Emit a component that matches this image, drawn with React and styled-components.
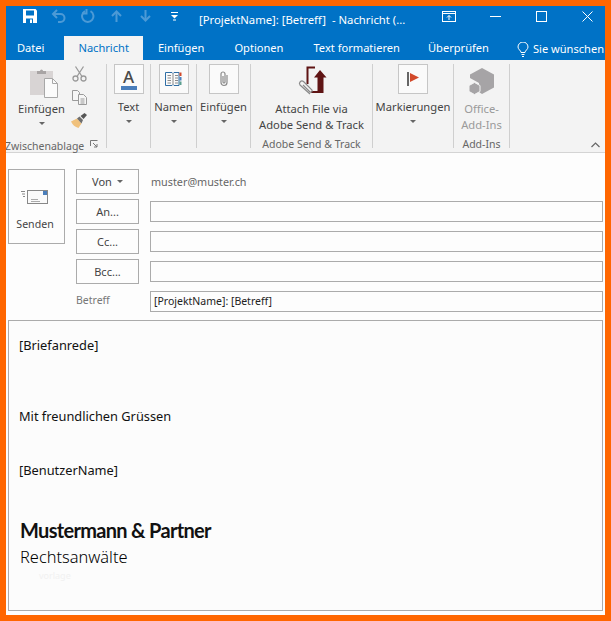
import React from "react"
import styled, { createGlobalStyle } from "styled-components"

const GlobalStyle = createGlobalStyle`
  html, body { margin: 0; padding: 0; background: #ff6600; }
  body { font-family: "Noto Sans", "Open Sans", sans-serif; }
`

const Frame = styled.div`
  box-sizing: border-box;
  width: 611px;
  height: 621px;
  border: 6px solid #ff6600;
  background: #fdfdfd;
  display: flex;
  flex-direction: column;
  overflow: hidden;
`

const TitleBar = styled.div`
  height: 30px;
  flex: none;
  background: #0072c6;
  display: flex;
  align-items: flex-start;
  padding-left: 9px;
  color: #fff;
`

const QatSlot = styled.div`
  width: 29px;
  height: 20px;
  flex: none;
  display: flex;
  align-items: center;
  justify-content: center;
`

const Title = styled.div`
  margin-left: 10px;
  font-size: 11.3px;
  line-height: 27px;
  white-space: pre;
  flex: 1;
`

const WindowControls = styled.div`
  display: flex;
  margin-right: -5px;
`

const WindowButton = styled.div`
  width: 46px;
  height: 20px;
  display: flex;
  align-items: center;
  justify-content: center;
`

const TabRow = styled.div`
  height: 24px;
  flex: none;
  background: #0072c6;
  display: flex;
`

const Tab = styled.div`
  padding: 2px ${(p) => (p.$active ? 14 : 15)}px 0;
  font-size: 11.1px;
  color: ${(p) => (p.$active ? "#0072c6" : "#fff")};
  background: ${(p) => (p.$active ? "#f3f3f3" : "transparent")};
  white-space: nowrap;
  line-height: 20px;
`

const FileTab = styled(Tab)`
  padding: 2px 20px 0 11px;
`

const CheckTab = styled(Tab)`
  padding-left: 13px;
  padding-right: 14px;
`

const TellMe = styled(Tab)`
  display: flex;
  align-items: center;
  gap: 4px;
  padding-left: 14px;
  padding-right: 0;
`

const Ribbon = styled.div`
  height: 84px;
  flex: none;
  background: #f3f3f3;
  border-bottom: 1px solid #d4d4d4;
  padding: 4px 0;
  display: flex;
  position: relative;
`

const Group = styled.div`
  box-sizing: border-box;
  width: ${(p) => p.$width}px;
  height: 84px;
  flex: none;
  border-right: 1px solid #cfcfcf;
  display: flex;
  flex-direction: column;
  align-items: center;
`

const GroupBody = styled.div`
  flex: 1;
  width: 100%;
  display: flex;
  flex-direction: column;
  align-items: center;
`

const GroupLabel = styled.div`
  height: 14px;
  line-height: 14px;
  margin-bottom: -3px;
  font-size: 10.5px;
  color: #666;
  white-space: nowrap;
  text-align: center;
`

const ClipboardBody = styled.div`
  flex: 1;
  display: flex;
  width: 100%;
  padding-left: 12px;
  box-sizing: border-box;
  gap: 6px;
`

const PasteColumn = styled.div`
  width: 47px;
  display: flex;
  flex-direction: column;
  align-items: center;
  padding-top: 4px;
`

const PasteIconWrap = styled.div`
  height: 30px;
  margin-left: 5px;
`

const SmallColumn = styled.div`
  width: 16px;
  display: flex;
  flex-direction: column;
  align-items: center;
  gap: 8px;
  padding-top: 2px;
`

const ClipboardFooter = styled.div`
  width: 100%;
  display: flex;
  align-items: center;
  height: 14px;
  margin-bottom: -3px;
  margin-left: -2px;
  gap: 6px;
`

const IconBox = styled.div`
  box-sizing: border-box;
  width: 30px;
  height: 30px;
  flex: none;
  border: 1px solid #c6c6c6;
  background: #fafafa;
  display: flex;
  flex-direction: column;
  align-items: center;
  justify-content: center;
`

const HexWrap = styled.div`
  height: 27px;
  margin-top: 4px;
`

const LetterA = styled.span`
  font-size: 17px;
  line-height: 16px;
  font-weight: 500;
  color: #4a4a4a;
`

const ColorBar = styled.span`
  width: 16px;
  height: 4px;
  background: #4a7ebb;
  margin-top: 1px;
`

const BtnLabel = styled.div`
  margin-top: ${(p) => p.$top ?? 5}px;
  font-size: 11.2px;
  line-height: 16px;
  color: ${(p) => (p.$disabled ? "#9a9a9a" : "#444")};
  white-space: nowrap;
  text-align: center;
`

const Caret = styled.span`
  display: block;
  width: 0;
  height: 0;
  margin-top: ${(p) => p.$top ?? 5}px;
  border-left: 3px solid transparent;
  border-right: 3px solid transparent;
  border-top: 3px solid #666;
`

const Collapse = styled.svg`
  position: absolute;
  right: 5px;
  bottom: 4px;
`

const Compose = styled.div`
  flex: 1;
  min-height: 0;
  display: flex;
  flex-direction: column;
  padding: 16px 2px 4px;
  gap: 6px;
`

const Header = styled.div`
  display: flex;
  gap: 11px;
  align-items: flex-start;
`

const SendButton = styled.div`
  box-sizing: border-box;
  width: 57px;
  height: 75px;
  flex: none;
  border: 1px solid #ababab;
  display: flex;
  flex-direction: column;
  align-items: center;
  padding: 20px 3px 0 0;
`

const SendLabel = styled.div`
  margin-top: 12px;
  font-size: 10.6px;
  line-height: 16px;
  color: #444;
`

const Fields = styled.div`
  flex: 1;
  display: flex;
  flex-direction: column;
  gap: 5px;
`

const FieldRow = styled.div`
  display: flex;
  align-items: center;
  gap: 11px;
  height: 25px;
`

const FieldButton = styled.div`
  box-sizing: border-box;
  width: 63px;
  height: 25px;
  flex: none;
  border: 1px solid #ababab;
  display: flex;
  align-items: center;
  justify-content: center;
  gap: 5px;
  font-size: 11px;
  color: #444;
`

const FromAddress = styled.div`
  font-size: 10.8px;
  color: #666;
  padding-left: 1px;
`

const Input = styled.div`
  box-sizing: border-box;
  flex: 1;
  height: 21px;
  border: 1px solid #ababab;
  padding-left: 3px;
  font-size: 10.5px;
  line-height: 19px;
  color: #222;
`

const SubjectLabel = styled.div`
  width: 63px;
  flex: none;
  font-size: 10.5px;
  line-height: 14px;
  color: #777;
  margin-top: -4px;
`

const Body = styled.div`
  box-sizing: border-box;
  flex: 1;
  border: 1px solid #ababab;
  background: #fcfcfc;
  padding: 0 10px;
  color: #111;
`

const Line = styled.div`
  margin-top: ${(p) => p.$top}px;
  font-size: 12.8px;
  line-height: 18px;
`

const FirmName = styled.div`
  margin-top: 39px;
  margin-left: 1px;
  font-family: "Lato", "Noto Sans", sans-serif;
  font-size: 20px;
  line-height: 24px;
  font-weight: 700;
  letter-spacing: -0.68px;
`

const FirmKind = styled.div`
  margin-top: 5px;
  margin-left: 1px;
  font-size: 16.4px;
  line-height: 20px;
  font-weight: 300;
  color: #000;
`

const Watermark = styled.div`
  margin-top: 3px;
  margin-left: 20px;
  font-size: 9px;
  line-height: 12px;
  color: #f1f1f1;
`

const SaveIcon = () => (
  <svg width="14" height="14" viewBox="0 0 14 14">
    <path d="M0 0h12.500L14 1.500V14H0z" fill="#fff" />
    <rect x="3" y="1.500" width="8" height="5" fill="#0072c6" />
    <rect x="3" y="9.500" width="7" height="4.500" fill="#0072c6" />
    <rect x="7" y="10.500" width="2" height="3.500" fill="#fff" />
  </svg>
)

const UndoIcon = () => (
  <svg width="15" height="14" viewBox="0 0 15 14" fill="none" stroke="#4c9ad6" strokeWidth="2">
    <path d="M2 5h7.500a4 4 0 0 1 0 8H7" />
    <path d="M6 1L2 5l4 4" />
  </svg>
)

const RedoIcon = () => (
  <svg width="14" height="14" viewBox="0 0 14 14" fill="none" stroke="#4c9ad6" strokeWidth="2">
    <path d="M9.500 2.200a5.700 5.700 0 1 1-5.500 0" />
    <path d="M4.500 0.500v4.500h-4" transform="translate(1 -0.500)" />
  </svg>
)

const ArrowIcon = ({ down }) => (
  <svg width="11" height="12" viewBox="0 0 11 12" fill="none" stroke="#4c9ad6" strokeWidth="2">
    <g transform={down ? "rotate(180 5.500 6)" : undefined}>
      <path d="M5.500 12V2" />
      <path d="M1 6l4.500-4.500L10 6" />
    </g>
  </svg>
)

const QatMenuIcon = () => (
  <svg width="9" height="9" viewBox="0 0 9 9" fill="#fff">
    <rect x="1" y="0" width="7" height="1" />
    <path d="M1 3h7L4.500 6.500z" />
    <rect x="3" y="7.500" width="3" height="1" />
  </svg>
)

const RibbonDisplayIcon = () => (
  <svg width="14" height="11" viewBox="0 0 14 11" fill="none" stroke="#fff">
    <rect x="0.500" y="0.500" width="13" height="10" />
    <path d="M0.500 2.500h13M7 9V4.500M5 6.500l2-2 2 2" />
  </svg>
)

const MinimizeIcon = () => (
  <svg width="11" height="11" viewBox="0 0 11 11" stroke="#fff">
    <path d="M0 5.500h11" />
  </svg>
)

const MaximizeIcon = () => (
  <svg width="11" height="11" viewBox="0 0 11 11" fill="none" stroke="#fff">
    <rect x="0.500" y="0.500" width="10" height="10" />
  </svg>
)

const CloseIcon = () => (
  <svg width="11" height="11" viewBox="0 0 11 11" stroke="#fff">
    <path d="M0.500 0.500l10 10M10.500 0.500l-10 10" />
  </svg>
)

const BulbIcon = () => (
  <svg width="12" height="15" viewBox="0 0 12 15" fill="none" stroke="#fff">
    <path d="M4 10.500C4 8.500 1 7.500 1 5a5 5 0 0 1 10 0c0 2.500-3 3.500-3 5.500z" />
    <path d="M4.500 12.500h3M5 14.500h2" />
  </svg>
)

const PasteIcon = () => (
  <svg width="28" height="30" viewBox="0 0 28 30">
    <rect x="0" y="3" width="23" height="24" fill="#d8d4d4" />
    <path d="M7 3h3a1.500 1.500 0 0 1 3 0H16v3H7z" fill="#a8a4a4" />
    <path d="M14.500 10.500h8l5 5v14h-13z" fill="#fbfbfb" stroke="#a8a8a8" />
    <path d="M22.500 10.500v5h5" fill="none" stroke="#a8a8a8" />
  </svg>
)

const ScissorsIcon = () => (
  <svg width="15" height="16" viewBox="0 0 15 16" fill="none" stroke="#9a9a9a" strokeWidth="1.300">
    <circle cx="3.500" cy="12.500" r="2.500" />
    <circle cx="11.500" cy="12.500" r="2.500" />
    <path d="M5 10.500L11.500 0.500M10 10.500L3.500 0.500" />
  </svg>
)

const CopyIcon = () => (
  <svg width="15" height="15" viewBox="0 0 15 15" fill="#f6f6f6" stroke="#9a9a9a">
    <path d="M0.500 0.500h5l2 2v8h-7z" />
    <path d="M6.500 4.500h5l3 3v7h-8z" />
    <path d="M8.500 9h4M8.500 11h4M8.500 13h4" />
  </svg>
)

const BrushIcon = () => (
  <svg width="16" height="15" viewBox="0 0 16 15">
    <path d="M0 8.500L6 5.500L10.500 10.500L7.500 15C4 14 1.500 12 0 8.500z" fill="#f0c17c" />
    <path d="M6 5.500L8.500 3.500L12 7L10.500 10.500z" fill="#6e6e6e" />
    <path d="M9.500 3L13.500 0L16 2L12.500 6z" fill="#555" />
  </svg>
)

const LauncherIcon = () => (
  <svg width="8" height="8" viewBox="0 0 8 8" fill="none" stroke="#777">
    <path d="M0.500 6V0.500H7.500" />
    <path d="M3 3l4 4M7 4v3H4" />
  </svg>
)

const BookIcon = () => (
  <svg width="17" height="14" viewBox="0 0 17 14" fill="none" stroke="#2f6ea5">
    <path d="M0.500 0.500h6.500l1 1 1-1h5v13h-5l-1-1-1 1H0.500z" />
    <path d="M8 1.500v11M2.500 3.500h3.500M2.500 6h3.500M2.500 8.500h3.500M2.500 11h3.500M10 3.500h3M10 6h3M10 8.500h3M10 11h3" stroke="#8a8a8a" />
    <rect x="14.500" y="0.500" width="2" height="3.500" fill="#d2492a" stroke="none" />
    <rect x="14.500" y="5" width="2" height="3.500" fill="#4a7ebb" stroke="none" />
    <rect x="14.500" y="9.500" width="2" height="3.500" fill="#5b9e8f" stroke="none" />
  </svg>
)

const ClipIcon = () => (
  <svg width="10" height="16" viewBox="0 0 10 16" fill="none" stroke="#8a8a8a" strokeWidth="1.200">
    <path d="M8 4v7.500a3 3 0 0 1-6 0V3a2 2 0 0 1 4 0v8a1 1 0 0 1-2 0V5" />
  </svg>
)

const FlagIcon = () => (
  <svg width="12" height="14" viewBox="0 0 12 14">
    <rect x="0" y="0" width="2" height="14" fill="#666" />
    <path d="M3 1L12 5.500L3 10z" fill="#d2492a" />
  </svg>
)

const HexIcon = () => (
  <svg width="27" height="27" viewBox="0 0 27 27">
    <path d="M14 0L26 6.500V19.500L14 26L11 24V15L2 10V6.500z" fill="#a6a4a6" />
    <path d="M6.500 14.500L12 17.500V23.500L6.500 26.500L1 23.500V17.500z" fill="#a6a4a6" stroke="#f3f3f3" />
  </svg>
)

const AttachIcon = () => (
  <svg width="40" height="32" viewBox="0 0 40 32">
    <path d="M23 3.500H15.500V20" fill="none" stroke="#5f1414" strokeWidth="2" />
    <path d="M28 6L34.500 13.500H31.500V29H19V27H25.500V13.500H22z" fill="#5f1414" />
    <path d="M18 30L8 21a2.500 2.500 0 0 1 3.500-3.500L20 26a1.500 1.500 0 0 1-2 2L11 21" fill="none" stroke="#8a8a8a" strokeWidth="1.200" />
  </svg>
)

const MailIcon = () => (
  <svg width="28" height="14" viewBox="0 0 28 14" fill="none">
    <rect x="6.500" y="0.500" width="20" height="13" fill="#fafafa" stroke="#888" />
    <rect x="22" y="1" width="4" height="4" fill="#4a7ebb" />
    <path d="M10 9.500h7M10 11.500h9" stroke="#aaa" />
    <path d="M0 1.500h4M1 4h3M2 6.500h2" stroke="#888" />
  </svg>
)

const ribbonButtons = [
  { width: 44, label: "Text", icon: <><LetterA>A</LetterA><ColorBar /></> },
  { width: 46, label: "Namen", icon: <BookIcon /> },
  { width: 54, label: "Einfügen", icon: <ClipIcon /> },
]

const App = () => (
  <Frame>
    <GlobalStyle />
    <TitleBar>
      <QatSlot><SaveIcon /></QatSlot>
      <QatSlot><UndoIcon /></QatSlot>
      <QatSlot><RedoIcon /></QatSlot>
      <QatSlot><ArrowIcon /></QatSlot>
      <QatSlot><ArrowIcon down /></QatSlot>
      <QatSlot><QatMenuIcon /></QatSlot>
      <Title>[ProjektName]: [Betreff]  - Nachricht (...</Title>
      <WindowControls>
        <WindowButton><RibbonDisplayIcon /></WindowButton>
        <WindowButton><MinimizeIcon /></WindowButton>
        <WindowButton><MaximizeIcon /></WindowButton>
        <WindowButton><CloseIcon /></WindowButton>
      </WindowControls>
    </TitleBar>
    <TabRow>
      <FileTab>Datei</FileTab>
      <Tab $active>Nachricht</Tab>
      <Tab>Einfügen</Tab>
      <Tab>Optionen</Tab>
      <Tab>Text formatieren</Tab>
      <CheckTab>Überprüfen</CheckTab>
      <TellMe><BulbIcon />Sie wünschen</TellMe>
    </TabRow>
    <Ribbon>
      <Group $width={101}>
        <ClipboardBody>
          <PasteColumn>
            <PasteIconWrap><PasteIcon /></PasteIconWrap>
            <BtnLabel $top={3}>Einfügen</BtnLabel>
            <Caret />
          </PasteColumn>
          <SmallColumn>
            <ScissorsIcon />
            <CopyIcon />
            <BrushIcon />
          </SmallColumn>
        </ClipboardBody>
        <ClipboardFooter>
          <GroupLabel>Zwischenablage</GroupLabel>
          <LauncherIcon />
        </ClipboardFooter>
      </Group>
      {ribbonButtons.map((b) => (
        <Group $width={b.width} key={b.width}>
          <GroupBody>
            <IconBox>{b.icon}</IconBox>
            <BtnLabel>{b.label}</BtnLabel>
            <Caret />
          </GroupBody>
        </Group>
      ))}
      <Group $width={122}>
        <GroupBody>
          <AttachIcon />
          <BtnLabel $top={5}>Attach File via</BtnLabel>
          <BtnLabel $top={0}>Adobe Send &amp; Track</BtnLabel>
        </GroupBody>
        <GroupLabel>Adobe Send &amp; Track</GroupLabel>
      </Group>
      <Group $width={81}>
        <GroupBody>
          <IconBox><FlagIcon /></IconBox>
          <BtnLabel>Markierungen</BtnLabel>
          <Caret />
        </GroupBody>
      </Group>
      <Group $width={56}>
        <GroupBody>
          <HexWrap><HexIcon /></HexWrap>
          <BtnLabel $top={6} $disabled>Office-</BtnLabel>
          <BtnLabel $top={0} $disabled>Add-Ins</BtnLabel>
        </GroupBody>
        <GroupLabel>Add-Ins</GroupLabel>
      </Group>
      <Collapse width="9" height="6" viewBox="0 0 9 6" fill="none" stroke="#666" strokeWidth="1.200">
        <path d="M0.500 5L4.500 1l4 4" />
      </Collapse>
    </Ribbon>
    <Compose>
      <Header>
        <SendButton>
          <MailIcon />
          <SendLabel>Senden</SendLabel>
        </SendButton>
        <Fields>
          <FieldRow>
            <FieldButton>Von <Caret $top={0} /></FieldButton>
            <FromAddress>muster@muster.ch</FromAddress>
          </FieldRow>
          <FieldRow><FieldButton>An...</FieldButton><Input /></FieldRow>
          <FieldRow><FieldButton>Cc...</FieldButton><Input /></FieldRow>
          <FieldRow><FieldButton>Bcc...</FieldButton><Input /></FieldRow>
          <FieldRow>
            <SubjectLabel>Betreff</SubjectLabel>
            <Input>[ProjektName]: [Betreff]</Input>
          </FieldRow>
        </Fields>
      </Header>
      <Body>
        <Line $top={15}>[Briefanrede]</Line>
        <Line $top={53}>Mit freundlichen Grüssen</Line>
        <Line $top={36}>[BenutzerName]</Line>
        <FirmName>Mustermann &amp; Partner</FirmName>
        <FirmKind>Rechtsanwälte</FirmKind>
        <Watermark>vorlage</Watermark>
      </Body>
    </Compose>
  </Frame>
)

export default App
